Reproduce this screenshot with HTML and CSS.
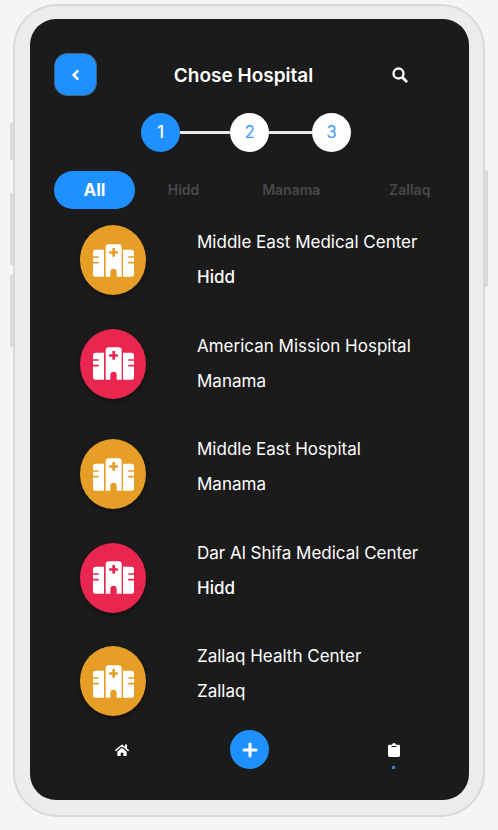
FILE: index.html
```html
<!DOCTYPE html>
<html lang="en">
<head>
<meta charset="utf-8">
<meta name="viewport" content="width=device-width, initial-scale=1">
<title>Chose Hospital</title>
<link rel="stylesheet" href="styles.css">
</head>
<body>
<svg class="sprite" aria-hidden="true">
  <symbol id="hospital" viewBox="0 0 123 98">
    <path fill-rule="evenodd" d="M8 17H33V98H7Q0 98 0 91V58H15Q18 58 18 55.500T15 53H0V41H15Q18 41 18 38.500T15 36H0V25Q0 17 8 17Z"/>
    <path d="M90 17H115Q123 17 123 25V36H108Q105 36 105 38.500T108 41H123V53H108Q105 53 105 55.500T108 58H123V91Q123 98 116 98H90Z"/>
    <path fill-rule="evenodd" d="M47 0H77Q86 0 86 9V98H71V84Q71 74 61.500 74T52 84V98H38V9Q38 0 47 0ZM58 13V21H50Q48 21 48 25T50 29H58V36Q58 38 62 38T66 36V29H73Q75 29 75 25T73 21H66V13Q66 11 62 11T58 13Z"/>
  </symbol>
</svg>
<div class="device">
  <span class="key key-mute"></span>
  <span class="key key-up"></span>
  <span class="key key-down"></span>
  <span class="key key-power"></span>
  <main class="screen">
    <header class="header">
      <button class="back" type="button" aria-label="Back">
        <svg width="8" height="12" viewBox="0 0 8 12"><path d="M5.500 2.200 1.700 6l3.800 3.800" fill="none" stroke="#fff" stroke-width="2.600" stroke-linecap="round" stroke-linejoin="round"/></svg>
      </button>
      <h1>Chose Hospital</h1>
      <button class="search" type="button" aria-label="Search">
        <svg width="16" height="16" viewBox="0 0 16 16" fill="none" stroke="#fff" stroke-linecap="round"><circle cx="6.500" cy="6.500" r="5" stroke-width="2.300"/><path d="m10.500 10.500 3.700 3.700" stroke-width="2.800"/></svg>
      </button>
    </header>
    <ol class="steps">
      <li class="step current">1</li>
      <li class="line long"></li>
      <li class="step">2</li>
      <li class="line"></li>
      <li class="step">3</li>
    </ol>
    <nav class="tabs" aria-label="Areas">
      <button class="tab active" type="button">All</button>
      <button class="tab" type="button">Hidd</button>
      <button class="tab" type="button">Manama</button>
      <button class="tab" type="button">Zallaq</button>
    </nav>
    <ul class="hospitals">
      <li class="hospital">
        <span class="badge amber"><svg><use href="#hospital"/></svg></span>
        <div class="info"><h2>Middle East Medical Center</h2><p class="strong">Hidd</p></div>
      </li>
      <li class="hospital">
        <span class="badge red"><svg><use href="#hospital"/></svg></span>
        <div class="info"><h2>American Mission Hospital</h2><p>Manama</p></div>
      </li>
      <li class="hospital low">
        <span class="badge amber"><svg><use href="#hospital"/></svg></span>
        <div class="info"><h2>Middle East Hospital</h2><p>Manama</p></div>
      </li>
      <li class="hospital low">
        <span class="badge red"><svg><use href="#hospital"/></svg></span>
        <div class="info"><h2>Dar Al Shifa Medical Center</h2><p class="strong">Hidd</p></div>
      </li>
      <li class="hospital low">
        <span class="badge amber"><svg><use href="#hospital"/></svg></span>
        <div class="info"><h2>Zallaq Health Center</h2><p>Zallaq</p></div>
      </li>
    </ul>
    <nav class="bottom" aria-label="Main">
      <button class="item" type="button" aria-label="Home">
        <svg width="14" height="12" viewBox="0 0 14 12"><path fill="#fff" d="M7 3.800 2.300 7.700V11.200Q2.300 12 3 12H5.700V8.700H8.300V12H11Q11.700 12 11.700 11.200V7.700Z"/><path d="M.8 6.400 7 1.200l6.200 5.200" fill="none" stroke="#fff" stroke-width="1.400" stroke-linecap="round" stroke-linejoin="round"/><path fill="#fff" d="M10 .5h2V5l-2-1.700Z"/></svg>
      </button>
      <button class="add" type="button" aria-label="Add">
        <svg width="16" height="16" viewBox="0 0 16 16"><path d="M8 2v12M2 8h12" fill="none" stroke="#fff" stroke-width="3" stroke-linecap="round"/></svg>
      </button>
      <button class="item marked" type="button" aria-label="Appointments">
        <svg width="12" height="14" viewBox="0 0 12 14"><path fill="#fff" d="M1.500 1.800H4Q4.300 0 6 0T8 1.800h2.500Q12 1.800 12 3.200v9.400Q12 14 10.500 14h-9Q0 14 0 12.600V3.200Q0 1.800 1.500 1.800Z"/><path d="M3.500 3.500h5" stroke="#1b1b1b" stroke-width="1"/></svg>
      </button>
    </nav>
  </main>
</div>
</body>
</html>
```
FILE: styles.css
```css
* {
  box-sizing: border-box;
  margin: 0;
  padding: 0;
}

body {
  padding: 4px 13px 13px;
  background: #f5f5f5;
  color: #fff;
  font-family: Inter, "Liberation Sans", sans-serif;
}

button {
  border: 0;
  background: none;
  color: inherit;
  font: inherit;
  cursor: pointer;
}

ul,
ol {
  list-style: none;
}

svg {
  display: block;
}

.sprite {
  position: absolute;
  width: 0;
  height: 0;
}

.device {
  position: relative;
  display: flex;
  min-height: calc(100vh - 17px);
  padding: 13px 14px 15px 15px;
  border: 2px solid #d9d9d9;
  border-radius: 44px;
  background: #ececec;
}

.key {
  position: absolute;
  left: -5px;
  width: 4px;
  height: 72px;
  border-radius: 2px 0 0 2px;
  background: #d9d9d9;
}

.key-mute {
  top: 117px;
  height: 37px;
}

.key-up {
  top: 187px;
}

.key-down {
  top: 269px;
}

.key-power {
  top: 164px;
  right: -5px;
  left: auto;
  height: 117px;
  border-radius: 0 2px 2px 0;
}

.screen {
  flex: 1;
  display: flex;
  flex-direction: column;
  padding: 34px 24px 31px;
  border-radius: 26px;
  background: #1b1b1b;
}

.header {
  display: grid;
  grid-template-columns: 43px 1fr 43px;
  align-items: center;
  padding-right: 24px;
}

.back {
  display: grid;
  place-items: center;
  height: 43px;
  border: 1px solid #46637f;
  border-radius: 13px;
  background: #1e90ff;
}

h1 {
  padding: 2px 0 0 12px;
  font-size: 19px;
  font-weight: 600;
  line-height: 24px;
  text-align: center;
}

.search {
  display: grid;
  place-items: center;
  height: 43px;
}

.steps {
  display: flex;
  align-items: center;
  width: 210px;
  margin: 17px auto 19px 87px;
}

.step {
  width: 39px;
  border-radius: 50%;
  background: #fff;
  color: #3d9dfc;
  font-size: 17px;
  line-height: 39px;
  text-align: center;
}

.step.current {
  background: #1e90ff;
  color: #fff;
  font-weight: 500;
}

.line {
  flex: 6;
  height: 3px;
  background: #ece6eb;
}

.line.long {
  flex: 7;
}

.tabs {
  display: grid;
  grid-template-columns: 81px 97px 1fr 1fr;
  margin-right: -24px;
}

.tab {
  color: #484848;
  font-size: 14px;
  font-weight: 600;
  line-height: 38px;
}

.tab.active {
  border-radius: 19px;
  background: #1e90ff;
  color: #fff;
  font-size: 17px;
  font-weight: 700;
}

.hospitals {
  flex: 1;
  display: flex;
  flex-direction: column;
  justify-content: space-between;
  margin: 16px 0 14px;
  padding-left: 26px;
}

.hospital {
  display: flex;
  align-items: flex-start;
  gap: 51px;
  height: 77px;
}

.hospital.low {
  align-items: flex-end;
}

.badge {
  display: grid;
  flex: none;
  place-items: center;
  width: 66px;
  height: 70px;
  border-radius: 50%;
  box-shadow: 0 2px 5px rgba(0, 0, 0, 0.4);
}

.badge svg {
  width: 41px;
  height: 33px;
  fill: #fff;
}

.amber {
  background: #e69e27;
}

.red {
  background: #e9264f;
}

.info {
  align-self: flex-start;
  font-size: 17px;
  line-height: 35px;
}

h2 {
  font: inherit;
}

.strong {
  font-weight: 500;
}

.bottom {
  display: flex;
  align-items: center;
  justify-content: space-between;
  padding: 0 32px 0 48px;
}

.item {
  position: relative;
  display: grid;
  place-items: center;
  width: 39px;
  height: 39px;
}

.marked::after {
  content: "";
  position: absolute;
  bottom: 0;
  left: 18px;
  width: 3px;
  height: 3px;
  background: #2b84dc;
}

.add {
  display: grid;
  place-items: center;
  width: 39px;
  height: 39px;
  margin-right: 16px;
  border-radius: 50%;
  background: #1e90ff;
}
```
